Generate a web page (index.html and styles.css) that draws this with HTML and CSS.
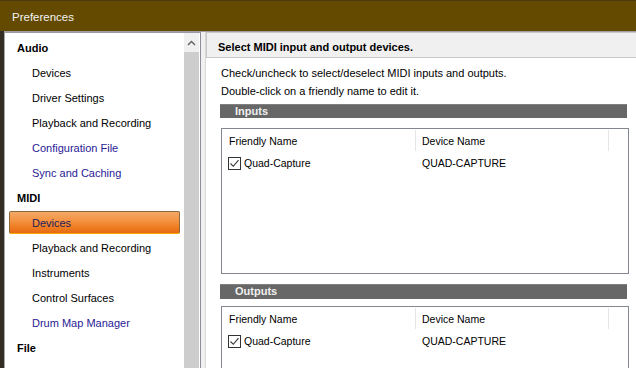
FILE: index.html
```html
<!DOCTYPE html>
<html lang="en">
<head>
<meta charset="UTF-8">
<meta name="viewport" content="width=device-width, initial-scale=1.0">
<title>Preferences</title>
<link rel="stylesheet" href="styles.css">
</head>
<body>
<div class="window">
  <div class="titlebar">Preferences</div>

  <div class="main">
    <div class="nav">
      <ul class="nav-list">
        <li class="nav-group">Audio</li>
        <li class="nav-item">Devices</li>
        <li class="nav-item">Driver Settings</li>
        <li class="nav-item">Playback and Recording</li>
        <li class="nav-item visited">Configuration File</li>
        <li class="nav-item visited">Sync and Caching</li>
        <li class="nav-group">MIDI</li>
        <li class="nav-item selected"><span>Devices</span></li>
        <li class="nav-item">Playback and Recording</li>
        <li class="nav-item">Instruments</li>
        <li class="nav-item">Control Surfaces</li>
        <li class="nav-item visited">Drum Map Manager</li>
        <li class="nav-group">File</li>
      </ul>
      <div class="scrollbar">
        <div class="scroll-up">
          <svg width="9" height="6" viewBox="0 0 9 6"><path d="M1 5 L4.5 1.5 L8 5" fill="none" stroke="#606060" stroke-width="1.4"/></svg>
        </div>
        <div class="scroll-thumb"></div>
      </div>
    </div>

    <div class="content">
      <div class="page-header">Select MIDI input and output devices.</div>
      <div class="page-body">
        <p class="hint">Check/uncheck to select/deselect MIDI inputs and outputs.<br>Double-click on a friendly name to edit it.</p>

        <div class="section-bar">Inputs</div>
        <div class="device-list inputs">
          <div class="list-head">
            <div class="col col-friendly">Friendly Name</div>
            <div class="col col-device">Device Name</div>
            <div class="col col-rest"></div>
          </div>
          <div class="list-row">
            <div class="col col-friendly"><span class="check"><svg width="11" height="11" viewBox="0 0 11 11"><path d="M1.5 5.5 L4.3 8.3 L9.5 2.2" fill="none" stroke="#333" stroke-width="1.1"/></svg></span>Quad-Capture</div>
            <div class="col col-device">QUAD-CAPTURE</div>
          </div>
        </div>

        <div class="section-bar outputs-bar">Outputs</div>
        <div class="device-list outputs">
          <div class="list-head">
            <div class="col col-friendly">Friendly Name</div>
            <div class="col col-device">Device Name</div>
            <div class="col col-rest"></div>
          </div>
          <div class="list-row">
            <div class="col col-friendly"><span class="check"><svg width="11" height="11" viewBox="0 0 11 11"><path d="M1.5 5.5 L4.3 8.3 L9.5 2.2" fill="none" stroke="#333" stroke-width="1.1"/></svg></span>Quad-Capture</div>
            <div class="col col-device">QUAD-CAPTURE</div>
          </div>
        </div>
      </div>
    </div>
  </div>
</div>
</body>
</html>
```

FILE: styles.css
```css
html, body {
    margin: 0;
    padding: 0;
    height: 100%;
    overflow: hidden;
}

body {
    background-color: #342d24;
    font-family: "Liberation Sans", Arial, sans-serif;
    font-size: 11px;
    color: #000;
}

.window {
    margin-left: 4px;
    height: 100%;
    background-color: #f0f0f0;
}

.titlebar {
    height: 31px;
    margin-left: -4px;
    padding-left: 12px;
    line-height: 33px;
    background-color: #634a00;
    border-top: 1px solid #4a3a10;
    box-sizing: border-box;
    color: #f2f2f2;
    font-size: 11.5px;
}

.main {
    display: flex;
    height: calc(100% - 31px);
    border-top: 1px solid #a0a0a0;
    box-sizing: border-box;
    background-color: #f0f0f0;
}

/* left tree */
.nav {
    display: flex;
    width: 197px;
    border-left: 1px solid #a8a8a8;
    border-top: 1px solid #9a9aa4;
    border-right: 1px solid #8c8c9c;
    background-color: #fff;
    box-sizing: border-box;
}

.nav-list {
    list-style: none;
    margin: 0;
    padding: 3px 0 0 0;
    width: 179px;
}

.nav-list li {
    height: 25px;
    line-height: 25px;
    white-space: nowrap;
}

.nav-group {
    padding-left: 12px;
    font-weight: bold;
}

.nav-item {
    padding-left: 27px;
}

.nav-item.visited {
    color: #281a96;
}

.nav-item.selected {
    padding: 0 4px 0 4px;
    height: 25px;
}

.nav-item.selected span {
    display: block;
    height: 23px;
    padding-left: 22px;
    border: 1px solid #8a6a3c;
    border-bottom-color: #f4a800;
    border-radius: 2px;
    box-sizing: border-box;
    line-height: 22px;
    color: #1c1c5a;
    background: linear-gradient(to bottom, #f3a866 0%, #f49444 40%, #f07e22 70%, #e66a14 100%);
}

.scrollbar {
    width: 15px;
    background-color: #cdcdcd;
}

.scroll-up {
    height: 19px;
    background-color: #f0f0f0;
    display: flex;
    align-items: center;
    justify-content: center;
}

/* right page */
.content {
    flex: 1;
    margin-left: 4px;
    background-color: #fff;
    border-left: 1px solid #d8d8d8;
}

.page-header {
    height: 26px;
    line-height: 28px;
    padding-left: 11px;
    background-color: #f0f0f0;
    border: 1px solid #c8c8c8;
    border-right: none;
    box-sizing: border-box;
    font-weight: bold;
    font-size: 11px;
}

.page-body {
    padding: 6px 7px 0 15px;
}

.hint {
    margin: 0 0 4px 0;
    line-height: 18px;
    font-size: 11px;
}

.section-bar {
    height: 13px;
    line-height: 13px;
    margin-right: 2px;
    margin-left: -1px;
    padding-left: 15px;
    background-color: #676767;
    border-top: 1px solid #808080;
    color: #f0f0f0;
    font-weight: bold;
}

.outputs-bar {
    height: 14px;
    margin-top: 10px;
}

.device-list {
    border: 1px solid #828790;
    background-color: #fff;
    font-size: 10.5px;
}

.inputs {
    margin-top: 10px;
    height: 146px;
    box-sizing: border-box;
}

.outputs {
    margin-top: 7px;
    height: 64px;
}

.list-head,
.list-row {
    display: flex;
}

.list-head {
    height: 25px;
}

.list-head .col {
    border-right: 1px solid #e5e5e5;
    margin: 1px 0 3px 0;
    line-height: 22px;
}

.list-row {
    height: 19px;
    line-height: 19px;
}

.col {
    box-sizing: border-box;
    white-space: nowrap;
}

.col-friendly {
    width: 194px;
    padding-left: 7px;
    display: flex;
    align-items: center;
}

.list-row .col-friendly {
    padding-left: 6px;
}

.col-device {
    width: 193px;
    padding-left: 6px;
}

.list-head .col-rest {
    border-right: none;
    flex: 1;
}

.check {
    display: inline-flex;
    align-items: center;
    justify-content: center;
    width: 13px;
    height: 13px;
    margin-right: 3px;
    border: 1px solid #333;
    box-sizing: border-box;
    background-color: #fff;
}
```
